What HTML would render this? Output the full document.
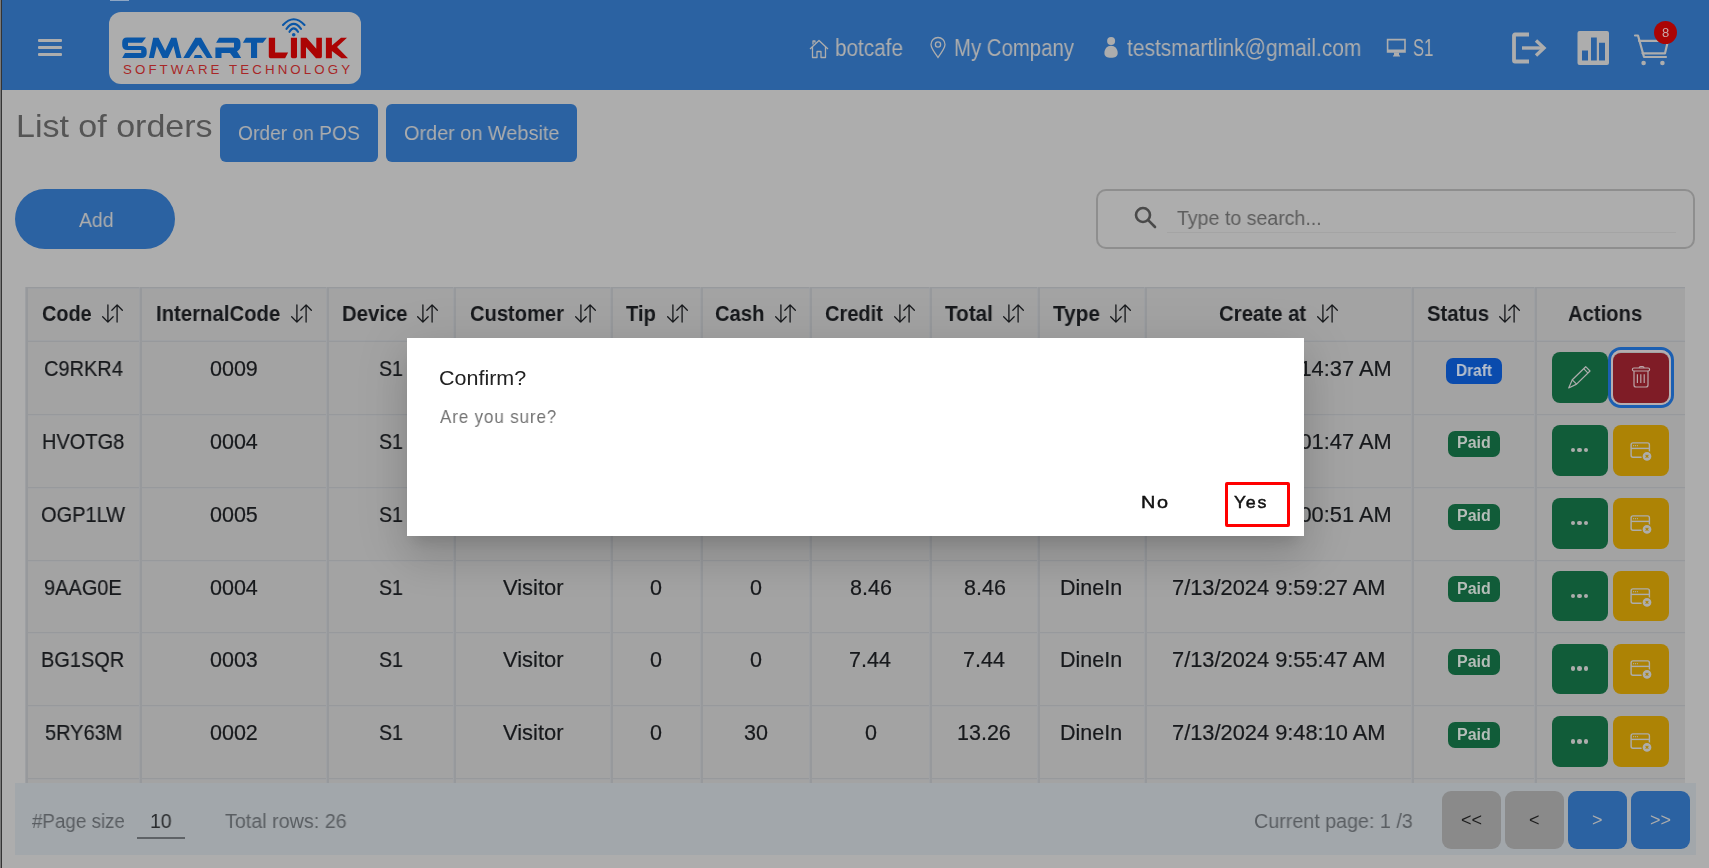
<!DOCTYPE html>
<html><head><meta charset="utf-8"><style>
html,body{margin:0;padding:0;}
body{-webkit-font-smoothing:antialiased;width:1709px;height:868px;overflow:hidden;position:relative;font-family:"Liberation Sans", sans-serif;background:#adadad;}
</style></head><body>
<div style="position:absolute;left:0px;top:0px;width:1709px;height:90px;background:#2b62a2"></div>
<div style="position:absolute;left:110px;top:0px;width:19px;height:1px;background:#8ea6c4"></div>
<div style="position:absolute;left:38px;top:39px;width:24px;height:2.8px;background:#adadad;border-radius:1px"></div>
<div style="position:absolute;left:38px;top:46px;width:24px;height:2.8px;background:#adadad;border-radius:1px"></div>
<div style="position:absolute;left:38px;top:53px;width:24px;height:2.8px;background:#adadad;border-radius:1px"></div>
<div style="position:absolute;left:109px;top:12px;width:252px;height:72px;background:#adadad;border-radius:12px"></div>
<svg style="position:absolute;left:0;top:0" width="400" height="90" viewBox="0 0 400 90">
<g fill="#0a56a6">
<path d="M127 37.6 H146 L142 42.7 H128 V45.9 H141 Q146.7 45.9 146.7 51 V53 Q146.7 58.1 141.5 58.1 H122.2 L125 53 H141.2 V50.1 H127.5 Q122.2 50.1 122.2 45 V42.5 Q122.2 37.6 127 37.6 Z"/>
<path d="M148.9 58.1 L153.2 37.8 H158.5 L165.2 50.8 L171.2 37.8 H176.5 L181.5 58.1 H176.5 L173.5 46 L167.9 58.1 H162.6 L156.8 46 L153.9 58.1 Z"/>
<path d="M183.3 58.1 L195.4 37.8 H201.1 L212.6 58.1 H206.9 L198.3 45.1 L189.2 58.1 Z M193.7 58.1 L194.8 55.1 H200.9 L202.8 58.1 Z"/>
<path d="M219.1 37.7 H235 Q240.5 37.7 240.5 43 V45.5 Q240.5 49.8 237 51.2 L241.2 58.1 H233.7 L230 53 H221.5 V58.1 H215.4 V47.6 H234 V42.8 H216.1 Z"/>
<path d="M245.9 37.7 H266.8 L262.9 42.8 H257.1 V58.1 H251 V42.8 H242.9 Z"/>
</g>
<g fill="#ab0404">
<path d="M268.8 37.8 H275.1 V52.6 H288.1 L285.1 58.2 H270.5 Q268.8 58.2 268.8 56.5 Z"/>
<path d="M290.9 37.8 H297 V56.6 Q297 58.2 295.4 58.2 H292.5 Q290.9 58.2 290.9 56.6 Z"/>
<path d="M300.7 58.2 V37.8 H306.5 L316.3 48.8 V37.8 H321.9 V56.6 Q321.9 58.2 320.3 58.2 H316 L306 47 V58.2 Z"/>
<path d="M325.9 37.8 H331.9 V45.6 L341 37.8 H347 L337 47.1 L348 58.2 H341.5 L331.9 51 V58.2 H325.9 Z"/>
</g>
<g fill="none" stroke="#0a56a6" stroke-width="2.1" stroke-linecap="round">
<path d="M283 25 Q293.7 13.5 304.5 25"/>
<path d="M286.5 28.8 Q293.7 19 301 28.8"/>
<path d="M289.5 31.8 Q293.7 25 298 31.8"/>
</g>
<circle cx="293.7" cy="34.7" r="1.8" fill="#0a56a6"/>
<text x="123" y="74" font-family="Liberation Sans" font-weight="400" font-size="13.3" fill="#a82626" textLength="227" lengthAdjust="spacing">SOFTWARE TECHNOLOGY</text>
</svg>
<svg style="position:absolute;left:809px;top:39px;overflow:visible;" width="20" height="20" viewBox="0 0 20 20"><g fill="none" stroke="#adadad" stroke-width="1.3" stroke-linejoin="round"><path d="M1 10 L10 1.5 L19 10"/><path d="M3.5 8 V18.5 H8 V12.5 H12 V18.5 H16.5 V8"/><path d="M4 5.5 V2 H6 V3.8"/></g></svg>
<div style="position:absolute;left:834.65px;top:35px;line-height:26px;height:26px;font-size:23px;font-weight:400;color:#adadad;white-space:nowrap;letter-spacing:0px;transform-origin:0 0;transform:scaleX(0.9002);will-change:transform;">botcafe</div>
<svg style="position:absolute;left:930px;top:37px;overflow:visible;" width="16" height="22" viewBox="0 0 16 22"><g fill="none" stroke="#adadad" stroke-width="1.3"><path d="M8 20.5 C4 15 1 11 1 7.5 A7 7 0 0 1 15 7.5 C15 11 12 15 8 20.5 Z"/><circle cx="8" cy="7.5" r="2.6"/></g></svg>
<div style="position:absolute;left:954.04px;top:35px;line-height:26px;height:26px;font-size:23px;font-weight:400;color:#adadad;white-space:nowrap;letter-spacing:0px;transform-origin:0 0;transform:scaleX(0.8853);will-change:transform;">My Company</div>
<svg style="position:absolute;left:1104px;top:37px;overflow:visible;" width="14" height="21" viewBox="0 0 14 21"><g fill="#adadad"><circle cx="7.1" cy="4" r="4"/><path d="M7 8.8 C11 8.8 13.7 12 13.7 16 C13.7 19.5 11 20.8 7 20.8 C3 20.8 0.4 19.5 0.4 16 C0.4 12 3 8.8 7 8.8 Z"/></g></svg>
<div style="position:absolute;left:1126.56px;top:35px;line-height:26px;height:26px;font-size:23px;font-weight:400;color:#adadad;white-space:nowrap;letter-spacing:0px;transform-origin:0 0;transform:scaleX(0.9112);will-change:transform;">testsmartlink@gmail.com</div>
<svg style="position:absolute;left:1386px;top:38px;overflow:visible;" width="20" height="19" viewBox="0 0 20 19"><g fill="#adadad"><path fill-rule="evenodd" d="M0.8 0.8 H19.8 V14.7 H0.8 Z M2.4 2.5 V11.5 H18.2 V2.5 Z"/><rect x="8" y="14.5" width="5" height="2.7"/><path d="M6.8 18.6 L7.6 17 H13.4 L14.2 18.6 Z"/></g></svg>
<div style="position:absolute;left:1412.67px;top:35px;line-height:26px;height:26px;font-size:23px;font-weight:400;color:#adadad;white-space:nowrap;letter-spacing:0px;transform-origin:0 0;transform:scaleX(0.7269);will-change:transform;">S1</div>
<svg style="position:absolute;left:1510px;top:30px;overflow:visible;" width="40" height="36" viewBox="0 0 40 36"><g fill="none" stroke="#adadad" stroke-width="3.8" stroke-linejoin="round"><path d="M19 4.5 H5 Q4 4.5 4 5.5 V30.5 Q4 31.5 5 31.5 H19"/></g><g fill="none" stroke="#adadad" stroke-width="3.4"><path d="M12 18 H34"/><path d="M26 10.5 L34 18 L26 25.5"/></g></svg>
<svg style="position:absolute;left:1577px;top:30px;overflow:visible;" width="33" height="36" viewBox="0 0 33 36"><path fill="#adadad" fill-rule="evenodd" d="M2.5 1 H30 Q32 1 32 3 V33 Q32 35 30 35 H2.5 Q0.5 35 0.5 33 V3 Q0.5 1 2.5 1 Z M5 20.5 V30.5 H11 V20.5 Z M14 7.5 V30.5 H19.8 V7.5 Z M22 12.8 V30.5 H28 V12.8 Z"/></svg>
<svg style="position:absolute;left:1633px;top:33px;overflow:visible;" width="38" height="34" viewBox="0 0 38 34"><g fill="none" stroke="#adadad" stroke-width="2.2" stroke-linejoin="round" stroke-linecap="round"><path d="M2 2.5 H5 L11 24 H33"/><path d="M6 7.8 H35 L32 20.3 H9.5"/></g><circle cx="10.6" cy="30" r="2.3" fill="#adadad"/><circle cx="29.4" cy="30" r="2.3" fill="#adadad"/></svg>
<div style="position:absolute;left:1653.8px;top:20.9px;width:23px;height:23px;border-radius:50%;background:#ab0404;"></div>
<div style="position:absolute;left:1661.94px;top:25px;line-height:15px;height:15px;font-size:13px;font-weight:400;color:#c9a9a9;white-space:nowrap;letter-spacing:0px;transform-origin:0 0;transform:scaleX(1.0000);will-change:transform;">8</div>
<div style="position:absolute;left:0px;top:0px;width:1px;height:868px;background:#7a7a7a"></div>
<div style="position:absolute;left:1px;top:0px;width:1px;height:868px;background:#343434"></div>
<div style="position:absolute;left:15.91px;top:108px;line-height:36px;height:36px;font-size:32px;font-weight:400;color:#555555;white-space:nowrap;letter-spacing:0px;transform-origin:0 0;transform:scaleX(1.0626);will-change:transform;">List of orders</div>
<div style="position:absolute;left:220px;top:104px;width:158px;height:58px;background:#2b62a2;border-radius:6px"></div>
<div style="position:absolute;left:237.86px;top:121px;line-height:23px;height:23px;font-size:20.5px;font-weight:400;color:#adadad;white-space:nowrap;letter-spacing:0px;transform-origin:0 0;transform:scaleX(0.9383);will-change:transform;">Order on POS</div>
<div style="position:absolute;left:386px;top:104px;width:191px;height:58px;background:#2b62a2;border-radius:6px"></div>
<div style="position:absolute;left:403.83px;top:121px;line-height:23px;height:23px;font-size:20.5px;font-weight:400;color:#adadad;white-space:nowrap;letter-spacing:0px;transform-origin:0 0;transform:scaleX(0.9692);will-change:transform;">Order on Website</div>
<div style="position:absolute;left:15px;top:189px;width:160px;height:60px;background:#2b62a2;border-radius:30px"></div>
<div style="position:absolute;left:79.00px;top:209px;line-height:22px;height:22px;font-size:20px;font-weight:400;color:#adadad;white-space:nowrap;letter-spacing:0px;transform-origin:0 0;transform:scaleX(0.9716);will-change:transform;">Add</div>
<div style="position:absolute;left:1096px;top:189px;width:599px;height:60px;border:2px solid #8e8e8e;border-radius:10px;box-sizing:border-box"></div>
<svg style="position:absolute;left:1133px;top:205px;overflow:visible;" width="25" height="25" viewBox="0 0 25 25"><g fill="none" stroke="#4a4a4a" stroke-width="2.6" stroke-linecap="round"><circle cx="10" cy="10" r="7"/><path d="M15.2 15.2 L22 22"/></g></svg>
<div style="position:absolute;left:1177.13px;top:207px;line-height:22px;height:22px;font-size:20px;font-weight:400;color:#5d5d5d;white-space:nowrap;letter-spacing:0px;transform-origin:0 0;transform:scaleX(0.9785);will-change:transform;">Type to search...</div>
<div style="position:absolute;left:1167px;top:231.5px;width:509px;height:1px;background:#a4a4a4"></div>
<div style="position:absolute;left:26px;top:287px;width:1659px;height:496.4px;background:#a3a3a3"></div>
<div style="position:absolute;left:26px;top:287px;width:1659px;height:1px;background:#97999c"></div>
<div style="position:absolute;left:26px;top:288px;width:1659px;height:1px;background:#9ea0a3"></div>
<div style="position:absolute;left:26px;top:340px;width:1659px;height:1px;background:#9ea0a3"></div>
<div style="position:absolute;left:26px;top:341px;width:1659px;height:1px;background:#97999c"></div>
<div style="position:absolute;left:26px;top:414px;width:1659px;height:1px;background:#97999c"></div>
<div style="position:absolute;left:26px;top:415px;width:1659px;height:1px;background:#a0a1a3"></div>
<div style="position:absolute;left:26px;top:487px;width:1659px;height:1px;background:#97999c"></div>
<div style="position:absolute;left:26px;top:488px;width:1659px;height:1px;background:#a0a1a3"></div>
<div style="position:absolute;left:26px;top:560px;width:1659px;height:1px;background:#97999c"></div>
<div style="position:absolute;left:26px;top:561px;width:1659px;height:1px;background:#a0a1a3"></div>
<div style="position:absolute;left:26px;top:632px;width:1659px;height:1px;background:#97999c"></div>
<div style="position:absolute;left:26px;top:633px;width:1659px;height:1px;background:#a0a1a3"></div>
<div style="position:absolute;left:26px;top:705px;width:1659px;height:1px;background:#97999c"></div>
<div style="position:absolute;left:26px;top:706px;width:1659px;height:1px;background:#a0a1a3"></div>
<div style="position:absolute;left:26px;top:778px;width:1659px;height:1px;background:#97999c"></div>
<div style="position:absolute;left:26px;top:779px;width:1659px;height:1px;background:#a0a1a3"></div>
<div style="position:absolute;left:25px;top:287px;width:1px;height:496.4px;background:#9ea0a3"></div>
<div style="position:absolute;left:26px;top:287px;width:2px;height:496.4px;background:#97999c"></div>
<div style="position:absolute;left:139px;top:287px;width:1px;height:496.4px;background:#9ea0a3"></div>
<div style="position:absolute;left:140px;top:287px;width:2px;height:496.4px;background:#97999c"></div>
<div style="position:absolute;left:326px;top:287px;width:1px;height:496.4px;background:#9ea0a3"></div>
<div style="position:absolute;left:327px;top:287px;width:2px;height:496.4px;background:#97999c"></div>
<div style="position:absolute;left:453px;top:287px;width:1px;height:496.4px;background:#9ea0a3"></div>
<div style="position:absolute;left:454px;top:287px;width:2px;height:496.4px;background:#97999c"></div>
<div style="position:absolute;left:610px;top:287px;width:1px;height:496.4px;background:#9ea0a3"></div>
<div style="position:absolute;left:611px;top:287px;width:2px;height:496.4px;background:#97999c"></div>
<div style="position:absolute;left:700px;top:287px;width:1px;height:496.4px;background:#9ea0a3"></div>
<div style="position:absolute;left:701px;top:287px;width:2px;height:496.4px;background:#97999c"></div>
<div style="position:absolute;left:809px;top:287px;width:1px;height:496.4px;background:#9ea0a3"></div>
<div style="position:absolute;left:810px;top:287px;width:2px;height:496.4px;background:#97999c"></div>
<div style="position:absolute;left:929px;top:287px;width:1px;height:496.4px;background:#9ea0a3"></div>
<div style="position:absolute;left:930px;top:287px;width:2px;height:496.4px;background:#97999c"></div>
<div style="position:absolute;left:1037px;top:287px;width:1px;height:496.4px;background:#9ea0a3"></div>
<div style="position:absolute;left:1038px;top:287px;width:2px;height:496.4px;background:#97999c"></div>
<div style="position:absolute;left:1144px;top:287px;width:1px;height:496.4px;background:#9ea0a3"></div>
<div style="position:absolute;left:1145px;top:287px;width:2px;height:496.4px;background:#97999c"></div>
<div style="position:absolute;left:1411px;top:287px;width:1px;height:496.4px;background:#9ea0a3"></div>
<div style="position:absolute;left:1412px;top:287px;width:2px;height:496.4px;background:#97999c"></div>
<div style="position:absolute;left:1534px;top:287px;width:1px;height:496.4px;background:#9ea0a3"></div>
<div style="position:absolute;left:1535px;top:287px;width:2px;height:496.4px;background:#97999c"></div>
<div style="position:absolute;left:41.99px;top:302px;line-height:24px;height:24px;font-size:21.5px;font-weight:700;color:#17191c;white-space:nowrap;letter-spacing:0px;transform-origin:0 0;transform:scaleX(0.9228);will-change:transform;">Code</div>
<svg style="position:absolute;left:102px;top:302.5px;overflow:visible;" width="21" height="21" viewBox="0 0 16 16"><g fill="#17191c"><path fill-rule="evenodd" d="M11.5 15a.5.5 0 0 0 .5-.5V2.707l3.146 3.147a.5.5 0 0 0 .708-.708l-4-4a.5.5 0 0 0-.708 0l-4 4a.5.5 0 1 0 .708.708L11 2.707V14.5a.5.5 0 0 0 .5.5m-7-14a.5.5 0 0 1 .5.5v11.793l3.146-3.147a.5.5 0 0 1 .708.708l-4 4a.5.5 0 0 1-.708 0l-4-4a.5.5 0 0 1 .708-.708L4 13.293V1.5a.5.5 0 0 1 .5-.5"/></g></svg>
<div style="position:absolute;left:155.70px;top:302px;line-height:24px;height:24px;font-size:21.5px;font-weight:700;color:#17191c;white-space:nowrap;letter-spacing:0px;transform-origin:0 0;transform:scaleX(0.9453);will-change:transform;">InternalCode</div>
<svg style="position:absolute;left:290.6px;top:302.5px;overflow:visible;" width="21" height="21" viewBox="0 0 16 16"><g fill="#17191c"><path fill-rule="evenodd" d="M11.5 15a.5.5 0 0 0 .5-.5V2.707l3.146 3.147a.5.5 0 0 0 .708-.708l-4-4a.5.5 0 0 0-.708 0l-4 4a.5.5 0 1 0 .708.708L11 2.707V14.5a.5.5 0 0 0 .5.5m-7-14a.5.5 0 0 1 .5.5v11.793l3.146-3.147a.5.5 0 0 1 .708.708l-4 4a.5.5 0 0 1-.708 0l-4-4a.5.5 0 0 1 .708-.708L4 13.293V1.5a.5.5 0 0 1 .5-.5"/></g></svg>
<div style="position:absolute;left:342.10px;top:302px;line-height:24px;height:24px;font-size:21.5px;font-weight:700;color:#17191c;white-space:nowrap;letter-spacing:0px;transform-origin:0 0;transform:scaleX(0.9457);will-change:transform;">Device</div>
<svg style="position:absolute;left:417px;top:302.5px;overflow:visible;" width="21" height="21" viewBox="0 0 16 16"><g fill="#17191c"><path fill-rule="evenodd" d="M11.5 15a.5.5 0 0 0 .5-.5V2.707l3.146 3.147a.5.5 0 0 0 .708-.708l-4-4a.5.5 0 0 0-.708 0l-4 4a.5.5 0 1 0 .708.708L11 2.707V14.5a.5.5 0 0 0 .5.5m-7-14a.5.5 0 0 1 .5.5v11.793l3.146-3.147a.5.5 0 0 1 .708.708l-4 4a.5.5 0 0 1-.708 0l-4-4a.5.5 0 0 1 .708-.708L4 13.293V1.5a.5.5 0 0 1 .5-.5"/></g></svg>
<div style="position:absolute;left:469.58px;top:302px;line-height:24px;height:24px;font-size:21.5px;font-weight:700;color:#17191c;white-space:nowrap;letter-spacing:0px;transform-origin:0 0;transform:scaleX(0.9362);will-change:transform;">Customer</div>
<svg style="position:absolute;left:574.8px;top:302.5px;overflow:visible;" width="21" height="21" viewBox="0 0 16 16"><g fill="#17191c"><path fill-rule="evenodd" d="M11.5 15a.5.5 0 0 0 .5-.5V2.707l3.146 3.147a.5.5 0 0 0 .708-.708l-4-4a.5.5 0 0 0-.708 0l-4 4a.5.5 0 1 0 .708.708L11 2.707V14.5a.5.5 0 0 0 .5.5m-7-14a.5.5 0 0 1 .5.5v11.793l3.146-3.147a.5.5 0 0 1 .708.708l-4 4a.5.5 0 0 1-.708 0l-4-4a.5.5 0 0 1 .708-.708L4 13.293V1.5a.5.5 0 0 1 .5-.5"/></g></svg>
<div style="position:absolute;left:625.97px;top:302px;line-height:24px;height:24px;font-size:21.5px;font-weight:700;color:#17191c;white-space:nowrap;letter-spacing:0px;transform-origin:0 0;transform:scaleX(0.9366);will-change:transform;">Tip</div>
<svg style="position:absolute;left:666.6px;top:302.5px;overflow:visible;" width="21" height="21" viewBox="0 0 16 16"><g fill="#17191c"><path fill-rule="evenodd" d="M11.5 15a.5.5 0 0 0 .5-.5V2.707l3.146 3.147a.5.5 0 0 0 .708-.708l-4-4a.5.5 0 0 0-.708 0l-4 4a.5.5 0 1 0 .708.708L11 2.707V14.5a.5.5 0 0 0 .5.5m-7-14a.5.5 0 0 1 .5.5v11.793l3.146-3.147a.5.5 0 0 1 .708.708l-4 4a.5.5 0 0 1-.708 0l-4-4a.5.5 0 0 1 .708-.708L4 13.293V1.5a.5.5 0 0 1 .5-.5"/></g></svg>
<div style="position:absolute;left:715.18px;top:302px;line-height:24px;height:24px;font-size:21.5px;font-weight:700;color:#17191c;white-space:nowrap;letter-spacing:0px;transform-origin:0 0;transform:scaleX(0.9386);will-change:transform;">Cash</div>
<svg style="position:absolute;left:774.6px;top:302.5px;overflow:visible;" width="21" height="21" viewBox="0 0 16 16"><g fill="#17191c"><path fill-rule="evenodd" d="M11.5 15a.5.5 0 0 0 .5-.5V2.707l3.146 3.147a.5.5 0 0 0 .708-.708l-4-4a.5.5 0 0 0-.708 0l-4 4a.5.5 0 1 0 .708.708L11 2.707V14.5a.5.5 0 0 0 .5.5m-7-14a.5.5 0 0 1 .5.5v11.793l3.146-3.147a.5.5 0 0 1 .708.708l-4 4a.5.5 0 0 1-.708 0l-4-4a.5.5 0 0 1 .708-.708L4 13.293V1.5a.5.5 0 0 1 .5-.5"/></g></svg>
<div style="position:absolute;left:824.99px;top:302px;line-height:24px;height:24px;font-size:21.5px;font-weight:700;color:#17191c;white-space:nowrap;letter-spacing:0px;transform-origin:0 0;transform:scaleX(0.9311);will-change:transform;">Credit</div>
<svg style="position:absolute;left:894px;top:302.5px;overflow:visible;" width="21" height="21" viewBox="0 0 16 16"><g fill="#17191c"><path fill-rule="evenodd" d="M11.5 15a.5.5 0 0 0 .5-.5V2.707l3.146 3.147a.5.5 0 0 0 .708-.708l-4-4a.5.5 0 0 0-.708 0l-4 4a.5.5 0 1 0 .708.708L11 2.707V14.5a.5.5 0 0 0 .5.5m-7-14a.5.5 0 0 1 .5.5v11.793l3.146-3.147a.5.5 0 0 1 .708.708l-4 4a.5.5 0 0 1-.708 0l-4-4a.5.5 0 0 1 .708-.708L4 13.293V1.5a.5.5 0 0 1 .5-.5"/></g></svg>
<div style="position:absolute;left:945.06px;top:302px;line-height:24px;height:24px;font-size:21.5px;font-weight:700;color:#17191c;white-space:nowrap;letter-spacing:0px;transform-origin:0 0;transform:scaleX(0.9625);will-change:transform;">Total</div>
<svg style="position:absolute;left:1002.7px;top:302.5px;overflow:visible;" width="21" height="21" viewBox="0 0 16 16"><g fill="#17191c"><path fill-rule="evenodd" d="M11.5 15a.5.5 0 0 0 .5-.5V2.707l3.146 3.147a.5.5 0 0 0 .708-.708l-4-4a.5.5 0 0 0-.708 0l-4 4a.5.5 0 1 0 .708.708L11 2.707V14.5a.5.5 0 0 0 .5.5m-7-14a.5.5 0 0 1 .5.5v11.793l3.146-3.147a.5.5 0 0 1 .708.708l-4 4a.5.5 0 0 1-.708 0l-4-4a.5.5 0 0 1 .708-.708L4 13.293V1.5a.5.5 0 0 1 .5-.5"/></g></svg>
<div style="position:absolute;left:1052.76px;top:302px;line-height:24px;height:24px;font-size:21.5px;font-weight:700;color:#17191c;white-space:nowrap;letter-spacing:0px;transform-origin:0 0;transform:scaleX(0.9638);will-change:transform;">Type</div>
<svg style="position:absolute;left:1110px;top:302.5px;overflow:visible;" width="21" height="21" viewBox="0 0 16 16"><g fill="#17191c"><path fill-rule="evenodd" d="M11.5 15a.5.5 0 0 0 .5-.5V2.707l3.146 3.147a.5.5 0 0 0 .708-.708l-4-4a.5.5 0 0 0-.708 0l-4 4a.5.5 0 1 0 .708.708L11 2.707V14.5a.5.5 0 0 0 .5.5m-7-14a.5.5 0 0 1 .5.5v11.793l3.146-3.147a.5.5 0 0 1 .708.708l-4 4a.5.5 0 0 1-.708 0l-4-4a.5.5 0 0 1 .708-.708L4 13.293V1.5a.5.5 0 0 1 .5-.5"/></g></svg>
<div style="position:absolute;left:1218.87px;top:302px;line-height:24px;height:24px;font-size:21.5px;font-weight:700;color:#17191c;white-space:nowrap;letter-spacing:0px;transform-origin:0 0;transform:scaleX(0.9475);will-change:transform;">Create at</div>
<svg style="position:absolute;left:1317px;top:302.5px;overflow:visible;" width="21" height="21" viewBox="0 0 16 16"><g fill="#17191c"><path fill-rule="evenodd" d="M11.5 15a.5.5 0 0 0 .5-.5V2.707l3.146 3.147a.5.5 0 0 0 .708-.708l-4-4a.5.5 0 0 0-.708 0l-4 4a.5.5 0 1 0 .708.708L11 2.707V14.5a.5.5 0 0 0 .5.5m-7-14a.5.5 0 0 1 .5.5v11.793l3.146-3.147a.5.5 0 0 1 .708.708l-4 4a.5.5 0 0 1-.708 0l-4-4a.5.5 0 0 1 .708-.708L4 13.293V1.5a.5.5 0 0 1 .5-.5"/></g></svg>
<div style="position:absolute;left:1426.91px;top:302px;line-height:24px;height:24px;font-size:21.5px;font-weight:700;color:#17191c;white-space:nowrap;letter-spacing:0px;transform-origin:0 0;transform:scaleX(0.9447);will-change:transform;">Status</div>
<svg style="position:absolute;left:1499.4px;top:302.5px;overflow:visible;" width="21" height="21" viewBox="0 0 16 16"><g fill="#17191c"><path fill-rule="evenodd" d="M11.5 15a.5.5 0 0 0 .5-.5V2.707l3.146 3.147a.5.5 0 0 0 .708-.708l-4-4a.5.5 0 0 0-.708 0l-4 4a.5.5 0 1 0 .708.708L11 2.707V14.5a.5.5 0 0 0 .5.5m-7-14a.5.5 0 0 1 .5.5v11.793l3.146-3.147a.5.5 0 0 1 .708.708l-4 4a.5.5 0 0 1-.708 0l-4-4a.5.5 0 0 1 .708-.708L4 13.293V1.5a.5.5 0 0 1 .5-.5"/></g></svg>
<div style="position:absolute;left:1568.03px;top:302px;line-height:24px;height:24px;font-size:21.5px;font-weight:700;color:#17191c;white-space:nowrap;letter-spacing:0px;transform-origin:0 0;transform:scaleX(0.9406);will-change:transform;">Actions</div>
<div style="position:absolute;left:43.70px;top:357px;line-height:24px;height:24px;font-size:21.5px;font-weight:400;color:#17191c;white-space:nowrap;letter-spacing:0px;transform-origin:0 0;transform:scaleX(0.9300);will-change:transform;-webkit-text-stroke:0.2px #17191c;">C9RKR4</div>
<div style="position:absolute;left:210.23px;top:357px;line-height:24px;height:24px;font-size:21.5px;font-weight:400;color:#17191c;white-space:nowrap;letter-spacing:0px;transform-origin:0 0;transform:scaleX(1.0000);will-change:transform;-webkit-text-stroke:0.2px #17191c;">0009</div>
<div style="position:absolute;left:379.26px;top:357px;line-height:24px;height:24px;font-size:21.5px;font-weight:400;color:#17191c;white-space:nowrap;letter-spacing:0px;transform-origin:0 0;transform:scaleX(0.9100);will-change:transform;-webkit-text-stroke:0.2px #17191c;">S1</div>
<div style="position:absolute;left:502.80px;top:357px;line-height:24px;height:24px;font-size:21.5px;font-weight:400;color:#17191c;white-space:nowrap;letter-spacing:0px;transform-origin:0 0;transform:scaleX(1.0200);will-change:transform;-webkit-text-stroke:0.2px #17191c;">Visitor</div>
<div style="position:absolute;left:650.45px;top:357px;line-height:24px;height:24px;font-size:21.5px;font-weight:400;color:#17191c;white-space:nowrap;letter-spacing:0px;transform-origin:0 0;transform:scaleX(1.0000);will-change:transform;-webkit-text-stroke:0.2px #17191c;">0</div>
<div style="position:absolute;left:750.05px;top:357px;line-height:24px;height:24px;font-size:21.5px;font-weight:400;color:#17191c;white-space:nowrap;letter-spacing:0px;transform-origin:0 0;transform:scaleX(1.0000);will-change:transform;-webkit-text-stroke:0.2px #17191c;">0</div>
<div style="position:absolute;left:864.50px;top:357px;line-height:24px;height:24px;font-size:21.5px;font-weight:400;color:#17191c;white-space:nowrap;letter-spacing:0px;transform-origin:0 0;transform:scaleX(1.0000);will-change:transform;-webkit-text-stroke:0.2px #17191c;">0</div>
<div style="position:absolute;left:963.67px;top:357px;line-height:24px;height:24px;font-size:21.5px;font-weight:400;color:#17191c;white-space:nowrap;letter-spacing:0px;transform-origin:0 0;transform:scaleX(1.0000);will-change:transform;-webkit-text-stroke:0.2px #17191c;">8.46</div>
<div style="position:absolute;left:1060.49px;top:357px;line-height:24px;height:24px;font-size:21.5px;font-weight:400;color:#17191c;white-space:nowrap;letter-spacing:0px;transform-origin:0 0;transform:scaleX(1.0000);will-change:transform;-webkit-text-stroke:0.2px #17191c;">DineIn</div>
<div style="position:absolute;left:1166.28px;top:357px;line-height:24px;height:24px;font-size:21.5px;font-weight:400;color:#17191c;white-space:nowrap;letter-spacing:0px;transform-origin:0 0;transform:scaleX(1.0150);will-change:transform;-webkit-text-stroke:0.2px #17191c;">7/13/2024 10:14:37 AM</div>
<div style="position:absolute;left:1446px;top:357.9px;width:56px;height:26.6px;background:#0a4bad;border-radius:7px"></div>
<div style="position:absolute;left:1455.64px;top:362px;line-height:17px;height:17px;font-size:16px;font-weight:700;color:#b8c0cc;white-space:nowrap;letter-spacing:0px;transform-origin:0 0;transform:scaleX(0.9633);will-change:transform;">Draft</div>
<div style="position:absolute;left:1552px;top:352.3px;width:55.6px;height:50.7px;background:#115c39;border-radius:8px"></div>
<svg style="position:absolute;left:1560px;top:360.0px;overflow:visible;" width="40" height="40" viewBox="0 0 40 40"><g fill="none" stroke="#adadad" stroke-width="1.2" stroke-linejoin="round"><path d="M12.3 19.8 L25.7 6.7 L30 11 L16.6 24.1 Z"/><path d="M12.3 19.8 L8.7 28 L16.6 24.1"/><path d="M23.7 8.7 L28 13.2"/></g></svg>
<div style="position:absolute;left:1608.2px;top:347.0px;width:66px;height:61.2px;border:3px solid #1b5fb2;border-radius:13px;box-sizing:border-box"></div>
<div style="position:absolute;left:1611.2px;top:350.0px;width:60px;height:55.2px;border:2px solid #b5aeb0;border-radius:10px;box-sizing:border-box"></div>
<div style="position:absolute;left:1612.9px;top:352.5px;width:56.1px;height:50.5px;background:#7f1c26;border-radius:8px"></div>
<svg style="position:absolute;left:1620px;top:355.0px;overflow:visible;" width="40" height="40" viewBox="0 0 40 40"><g fill="none" stroke="#bba5a8" stroke-width="1.2" stroke-linejoin="round"><path d="M19.2 13 Q19.2 11.6 20.6 11.6 H22.6 Q24 11.6 24 13"/><rect x="12.4" y="13" width="17.2" height="3" rx="1.5"/><path d="M14 16 V30 Q14 32 16 32 H26 Q28 32 28 30 V16"/><path d="M17.4 19.2 V27.9 M20.8 19.2 V27.9 M24.2 19.2 V27.9"/></g></svg>
<div style="position:absolute;left:41.90px;top:430px;line-height:24px;height:24px;font-size:21.5px;font-weight:400;color:#17191c;white-space:nowrap;letter-spacing:0px;transform-origin:0 0;transform:scaleX(0.9300);will-change:transform;-webkit-text-stroke:0.2px #17191c;">HVOTG8</div>
<div style="position:absolute;left:210.04px;top:430px;line-height:24px;height:24px;font-size:21.5px;font-weight:400;color:#17191c;white-space:nowrap;letter-spacing:0px;transform-origin:0 0;transform:scaleX(1.0000);will-change:transform;-webkit-text-stroke:0.2px #17191c;">0004</div>
<div style="position:absolute;left:379.26px;top:430px;line-height:24px;height:24px;font-size:21.5px;font-weight:400;color:#17191c;white-space:nowrap;letter-spacing:0px;transform-origin:0 0;transform:scaleX(0.9100);will-change:transform;-webkit-text-stroke:0.2px #17191c;">S1</div>
<div style="position:absolute;left:502.80px;top:430px;line-height:24px;height:24px;font-size:21.5px;font-weight:400;color:#17191c;white-space:nowrap;letter-spacing:0px;transform-origin:0 0;transform:scaleX(1.0200);will-change:transform;-webkit-text-stroke:0.2px #17191c;">Visitor</div>
<div style="position:absolute;left:650.45px;top:430px;line-height:24px;height:24px;font-size:21.5px;font-weight:400;color:#17191c;white-space:nowrap;letter-spacing:0px;transform-origin:0 0;transform:scaleX(1.0000);will-change:transform;-webkit-text-stroke:0.2px #17191c;">0</div>
<div style="position:absolute;left:750.05px;top:430px;line-height:24px;height:24px;font-size:21.5px;font-weight:400;color:#17191c;white-space:nowrap;letter-spacing:0px;transform-origin:0 0;transform:scaleX(1.0000);will-change:transform;-webkit-text-stroke:0.2px #17191c;">0</div>
<div style="position:absolute;left:864.50px;top:430px;line-height:24px;height:24px;font-size:21.5px;font-weight:400;color:#17191c;white-space:nowrap;letter-spacing:0px;transform-origin:0 0;transform:scaleX(1.0000);will-change:transform;-webkit-text-stroke:0.2px #17191c;">0</div>
<div style="position:absolute;left:963.67px;top:430px;line-height:24px;height:24px;font-size:21.5px;font-weight:400;color:#17191c;white-space:nowrap;letter-spacing:0px;transform-origin:0 0;transform:scaleX(1.0000);will-change:transform;-webkit-text-stroke:0.2px #17191c;">8.46</div>
<div style="position:absolute;left:1060.49px;top:430px;line-height:24px;height:24px;font-size:21.5px;font-weight:400;color:#17191c;white-space:nowrap;letter-spacing:0px;transform-origin:0 0;transform:scaleX(1.0000);will-change:transform;-webkit-text-stroke:0.2px #17191c;">DineIn</div>
<div style="position:absolute;left:1166.28px;top:430px;line-height:24px;height:24px;font-size:21.5px;font-weight:400;color:#17191c;white-space:nowrap;letter-spacing:0px;transform-origin:0 0;transform:scaleX(1.0150);will-change:transform;-webkit-text-stroke:0.2px #17191c;">7/13/2024 10:01:47 AM</div>
<div style="position:absolute;left:1447.7px;top:430.7px;width:52.2px;height:26.2px;background:#115c39;border-radius:7px"></div>
<div style="position:absolute;left:1457.21px;top:434px;line-height:17px;height:17px;font-size:16px;font-weight:700;color:#b5bdb8;white-space:nowrap;letter-spacing:0px;transform-origin:0 0;transform:scaleX(0.9858);will-change:transform;">Paid</div>
<div style="position:absolute;left:1552px;top:425.1px;width:55.6px;height:50.7px;background:#115c39;border-radius:8px"></div>
<div style="position:absolute;left:1570.5px;top:447.9px;width:4.6px;height:4.6px;border-radius:50%;background:#adadad"></div>
<div style="position:absolute;left:1577.3px;top:447.9px;width:4.6px;height:4.6px;border-radius:50%;background:#adadad"></div>
<div style="position:absolute;left:1583.9px;top:447.9px;width:4.6px;height:4.6px;border-radius:50%;background:#adadad"></div>
<div style="position:absolute;left:1613px;top:425.1px;width:55.8px;height:50.7px;background:#ad8305;border-radius:8px"></div>
<svg style="position:absolute;left:1620px;top:432.0px;overflow:visible;" width="40" height="40" viewBox="0 0 40 40"><g fill="none" stroke="#adadad" stroke-width="1.4"><path d="M22 25.2 H13 Q11.1 25.2 11.1 23.3 V12.8 Q11.1 10.9 13 10.9 H27.5 Q29.4 10.9 29.4 12.8 V20"/><path d="M11.1 16.4 H29.4"/></g><g fill="#adadad"><circle cx="13.6" cy="13.7" r=".6"/><circle cx="15.5" cy="13.7" r=".6"/><circle cx="17.4" cy="13.7" r=".6"/></g><circle cx="27" cy="24.3" r="5" fill="#adadad" stroke="#ad8305" stroke-width="1.2"/><path d="M25.6 22.9 L28.4 25.7 M28.4 22.9 L25.6 25.7" stroke="#ad8305" stroke-width="1.1"/></svg>
<div style="position:absolute;left:40.91px;top:503px;line-height:24px;height:24px;font-size:21.5px;font-weight:400;color:#17191c;white-space:nowrap;letter-spacing:0px;transform-origin:0 0;transform:scaleX(0.9300);will-change:transform;-webkit-text-stroke:0.2px #17191c;">OGP1LW</div>
<div style="position:absolute;left:210.16px;top:503px;line-height:24px;height:24px;font-size:21.5px;font-weight:400;color:#17191c;white-space:nowrap;letter-spacing:0px;transform-origin:0 0;transform:scaleX(1.0000);will-change:transform;-webkit-text-stroke:0.2px #17191c;">0005</div>
<div style="position:absolute;left:379.26px;top:503px;line-height:24px;height:24px;font-size:21.5px;font-weight:400;color:#17191c;white-space:nowrap;letter-spacing:0px;transform-origin:0 0;transform:scaleX(0.9100);will-change:transform;-webkit-text-stroke:0.2px #17191c;">S1</div>
<div style="position:absolute;left:502.80px;top:503px;line-height:24px;height:24px;font-size:21.5px;font-weight:400;color:#17191c;white-space:nowrap;letter-spacing:0px;transform-origin:0 0;transform:scaleX(1.0200);will-change:transform;-webkit-text-stroke:0.2px #17191c;">Visitor</div>
<div style="position:absolute;left:650.45px;top:503px;line-height:24px;height:24px;font-size:21.5px;font-weight:400;color:#17191c;white-space:nowrap;letter-spacing:0px;transform-origin:0 0;transform:scaleX(1.0000);will-change:transform;-webkit-text-stroke:0.2px #17191c;">0</div>
<div style="position:absolute;left:750.05px;top:503px;line-height:24px;height:24px;font-size:21.5px;font-weight:400;color:#17191c;white-space:nowrap;letter-spacing:0px;transform-origin:0 0;transform:scaleX(1.0000);will-change:transform;-webkit-text-stroke:0.2px #17191c;">0</div>
<div style="position:absolute;left:864.50px;top:503px;line-height:24px;height:24px;font-size:21.5px;font-weight:400;color:#17191c;white-space:nowrap;letter-spacing:0px;transform-origin:0 0;transform:scaleX(1.0000);will-change:transform;-webkit-text-stroke:0.2px #17191c;">0</div>
<div style="position:absolute;left:963.67px;top:503px;line-height:24px;height:24px;font-size:21.5px;font-weight:400;color:#17191c;white-space:nowrap;letter-spacing:0px;transform-origin:0 0;transform:scaleX(1.0000);will-change:transform;-webkit-text-stroke:0.2px #17191c;">8.46</div>
<div style="position:absolute;left:1060.49px;top:503px;line-height:24px;height:24px;font-size:21.5px;font-weight:400;color:#17191c;white-space:nowrap;letter-spacing:0px;transform-origin:0 0;transform:scaleX(1.0000);will-change:transform;-webkit-text-stroke:0.2px #17191c;">DineIn</div>
<div style="position:absolute;left:1166.28px;top:503px;line-height:24px;height:24px;font-size:21.5px;font-weight:400;color:#17191c;white-space:nowrap;letter-spacing:0px;transform-origin:0 0;transform:scaleX(1.0150);will-change:transform;-webkit-text-stroke:0.2px #17191c;">7/13/2024 10:00:51 AM</div>
<div style="position:absolute;left:1447.7px;top:503.5px;width:52.2px;height:26.2px;background:#115c39;border-radius:7px"></div>
<div style="position:absolute;left:1457.21px;top:507px;line-height:17px;height:17px;font-size:16px;font-weight:700;color:#b5bdb8;white-space:nowrap;letter-spacing:0px;transform-origin:0 0;transform:scaleX(0.9858);will-change:transform;">Paid</div>
<div style="position:absolute;left:1552px;top:497.9px;width:55.6px;height:50.7px;background:#115c39;border-radius:8px"></div>
<div style="position:absolute;left:1570.5px;top:520.7px;width:4.6px;height:4.6px;border-radius:50%;background:#adadad"></div>
<div style="position:absolute;left:1577.3px;top:520.7px;width:4.6px;height:4.6px;border-radius:50%;background:#adadad"></div>
<div style="position:absolute;left:1583.9px;top:520.7px;width:4.6px;height:4.6px;border-radius:50%;background:#adadad"></div>
<div style="position:absolute;left:1613px;top:497.9px;width:55.8px;height:50.7px;background:#ad8305;border-radius:8px"></div>
<svg style="position:absolute;left:1620px;top:504.79999999999995px;overflow:visible;" width="40" height="40" viewBox="0 0 40 40"><g fill="none" stroke="#adadad" stroke-width="1.4"><path d="M22 25.2 H13 Q11.1 25.2 11.1 23.3 V12.8 Q11.1 10.9 13 10.9 H27.5 Q29.4 10.9 29.4 12.8 V20"/><path d="M11.1 16.4 H29.4"/></g><g fill="#adadad"><circle cx="13.6" cy="13.7" r=".6"/><circle cx="15.5" cy="13.7" r=".6"/><circle cx="17.4" cy="13.7" r=".6"/></g><circle cx="27" cy="24.3" r="5" fill="#adadad" stroke="#ad8305" stroke-width="1.2"/><path d="M25.6 22.9 L28.4 25.7 M28.4 22.9 L25.6 25.7" stroke="#ad8305" stroke-width="1.1"/></svg>
<div style="position:absolute;left:44.46px;top:576px;line-height:24px;height:24px;font-size:21.5px;font-weight:400;color:#17191c;white-space:nowrap;letter-spacing:0px;transform-origin:0 0;transform:scaleX(0.9300);will-change:transform;-webkit-text-stroke:0.2px #17191c;">9AAG0E</div>
<div style="position:absolute;left:210.04px;top:576px;line-height:24px;height:24px;font-size:21.5px;font-weight:400;color:#17191c;white-space:nowrap;letter-spacing:0px;transform-origin:0 0;transform:scaleX(1.0000);will-change:transform;-webkit-text-stroke:0.2px #17191c;">0004</div>
<div style="position:absolute;left:379.26px;top:576px;line-height:24px;height:24px;font-size:21.5px;font-weight:400;color:#17191c;white-space:nowrap;letter-spacing:0px;transform-origin:0 0;transform:scaleX(0.9100);will-change:transform;-webkit-text-stroke:0.2px #17191c;">S1</div>
<div style="position:absolute;left:502.80px;top:576px;line-height:24px;height:24px;font-size:21.5px;font-weight:400;color:#17191c;white-space:nowrap;letter-spacing:0px;transform-origin:0 0;transform:scaleX(1.0200);will-change:transform;-webkit-text-stroke:0.2px #17191c;">Visitor</div>
<div style="position:absolute;left:650.45px;top:576px;line-height:24px;height:24px;font-size:21.5px;font-weight:400;color:#17191c;white-space:nowrap;letter-spacing:0px;transform-origin:0 0;transform:scaleX(1.0000);will-change:transform;-webkit-text-stroke:0.2px #17191c;">0</div>
<div style="position:absolute;left:750.05px;top:576px;line-height:24px;height:24px;font-size:21.5px;font-weight:400;color:#17191c;white-space:nowrap;letter-spacing:0px;transform-origin:0 0;transform:scaleX(1.0000);will-change:transform;-webkit-text-stroke:0.2px #17191c;">0</div>
<div style="position:absolute;left:849.62px;top:576px;line-height:24px;height:24px;font-size:21.5px;font-weight:400;color:#17191c;white-space:nowrap;letter-spacing:0px;transform-origin:0 0;transform:scaleX(1.0000);will-change:transform;-webkit-text-stroke:0.2px #17191c;">8.46</div>
<div style="position:absolute;left:963.67px;top:576px;line-height:24px;height:24px;font-size:21.5px;font-weight:400;color:#17191c;white-space:nowrap;letter-spacing:0px;transform-origin:0 0;transform:scaleX(1.0000);will-change:transform;-webkit-text-stroke:0.2px #17191c;">8.46</div>
<div style="position:absolute;left:1060.49px;top:576px;line-height:24px;height:24px;font-size:21.5px;font-weight:400;color:#17191c;white-space:nowrap;letter-spacing:0px;transform-origin:0 0;transform:scaleX(1.0000);will-change:transform;-webkit-text-stroke:0.2px #17191c;">DineIn</div>
<div style="position:absolute;left:1172.30px;top:576px;line-height:24px;height:24px;font-size:21.5px;font-weight:400;color:#17191c;white-space:nowrap;letter-spacing:0px;transform-origin:0 0;transform:scaleX(1.0150);will-change:transform;-webkit-text-stroke:0.2px #17191c;">7/13/2024 9:59:27 AM</div>
<div style="position:absolute;left:1447.7px;top:576.3px;width:52.2px;height:26.2px;background:#115c39;border-radius:7px"></div>
<div style="position:absolute;left:1457.21px;top:580px;line-height:17px;height:17px;font-size:16px;font-weight:700;color:#b5bdb8;white-space:nowrap;letter-spacing:0px;transform-origin:0 0;transform:scaleX(0.9858);will-change:transform;">Paid</div>
<div style="position:absolute;left:1552px;top:570.7px;width:55.6px;height:50.7px;background:#115c39;border-radius:8px"></div>
<div style="position:absolute;left:1570.5px;top:593.5px;width:4.6px;height:4.6px;border-radius:50%;background:#adadad"></div>
<div style="position:absolute;left:1577.3px;top:593.5px;width:4.6px;height:4.6px;border-radius:50%;background:#adadad"></div>
<div style="position:absolute;left:1583.9px;top:593.5px;width:4.6px;height:4.6px;border-radius:50%;background:#adadad"></div>
<div style="position:absolute;left:1613px;top:570.7px;width:55.8px;height:50.7px;background:#ad8305;border-radius:8px"></div>
<svg style="position:absolute;left:1620px;top:577.6px;overflow:visible;" width="40" height="40" viewBox="0 0 40 40"><g fill="none" stroke="#adadad" stroke-width="1.4"><path d="M22 25.2 H13 Q11.1 25.2 11.1 23.3 V12.8 Q11.1 10.9 13 10.9 H27.5 Q29.4 10.9 29.4 12.8 V20"/><path d="M11.1 16.4 H29.4"/></g><g fill="#adadad"><circle cx="13.6" cy="13.7" r=".6"/><circle cx="15.5" cy="13.7" r=".6"/><circle cx="17.4" cy="13.7" r=".6"/></g><circle cx="27" cy="24.3" r="5" fill="#adadad" stroke="#ad8305" stroke-width="1.2"/><path d="M25.6 22.9 L28.4 25.7 M28.4 22.9 L25.6 25.7" stroke="#ad8305" stroke-width="1.1"/></svg>
<div style="position:absolute;left:41.38px;top:648px;line-height:24px;height:24px;font-size:21.5px;font-weight:400;color:#17191c;white-space:nowrap;letter-spacing:0px;transform-origin:0 0;transform:scaleX(0.9300);will-change:transform;-webkit-text-stroke:0.2px #17191c;">BG1SQR</div>
<div style="position:absolute;left:210.23px;top:648px;line-height:24px;height:24px;font-size:21.5px;font-weight:400;color:#17191c;white-space:nowrap;letter-spacing:0px;transform-origin:0 0;transform:scaleX(1.0000);will-change:transform;-webkit-text-stroke:0.2px #17191c;">0003</div>
<div style="position:absolute;left:379.26px;top:648px;line-height:24px;height:24px;font-size:21.5px;font-weight:400;color:#17191c;white-space:nowrap;letter-spacing:0px;transform-origin:0 0;transform:scaleX(0.9100);will-change:transform;-webkit-text-stroke:0.2px #17191c;">S1</div>
<div style="position:absolute;left:502.80px;top:648px;line-height:24px;height:24px;font-size:21.5px;font-weight:400;color:#17191c;white-space:nowrap;letter-spacing:0px;transform-origin:0 0;transform:scaleX(1.0200);will-change:transform;-webkit-text-stroke:0.2px #17191c;">Visitor</div>
<div style="position:absolute;left:650.45px;top:648px;line-height:24px;height:24px;font-size:21.5px;font-weight:400;color:#17191c;white-space:nowrap;letter-spacing:0px;transform-origin:0 0;transform:scaleX(1.0000);will-change:transform;-webkit-text-stroke:0.2px #17191c;">0</div>
<div style="position:absolute;left:750.05px;top:648px;line-height:24px;height:24px;font-size:21.5px;font-weight:400;color:#17191c;white-space:nowrap;letter-spacing:0px;transform-origin:0 0;transform:scaleX(1.0000);will-change:transform;-webkit-text-stroke:0.2px #17191c;">0</div>
<div style="position:absolute;left:849.31px;top:648px;line-height:24px;height:24px;font-size:21.5px;font-weight:400;color:#17191c;white-space:nowrap;letter-spacing:0px;transform-origin:0 0;transform:scaleX(1.0000);will-change:transform;-webkit-text-stroke:0.2px #17191c;">7.44</div>
<div style="position:absolute;left:963.36px;top:648px;line-height:24px;height:24px;font-size:21.5px;font-weight:400;color:#17191c;white-space:nowrap;letter-spacing:0px;transform-origin:0 0;transform:scaleX(1.0000);will-change:transform;-webkit-text-stroke:0.2px #17191c;">7.44</div>
<div style="position:absolute;left:1060.49px;top:648px;line-height:24px;height:24px;font-size:21.5px;font-weight:400;color:#17191c;white-space:nowrap;letter-spacing:0px;transform-origin:0 0;transform:scaleX(1.0000);will-change:transform;-webkit-text-stroke:0.2px #17191c;">DineIn</div>
<div style="position:absolute;left:1172.30px;top:648px;line-height:24px;height:24px;font-size:21.5px;font-weight:400;color:#17191c;white-space:nowrap;letter-spacing:0px;transform-origin:0 0;transform:scaleX(1.0150);will-change:transform;-webkit-text-stroke:0.2px #17191c;">7/13/2024 9:55:47 AM</div>
<div style="position:absolute;left:1447.7px;top:649.0999999999999px;width:52.2px;height:26.2px;background:#115c39;border-radius:7px"></div>
<div style="position:absolute;left:1457.21px;top:653px;line-height:17px;height:17px;font-size:16px;font-weight:700;color:#b5bdb8;white-space:nowrap;letter-spacing:0px;transform-origin:0 0;transform:scaleX(0.9858);will-change:transform;">Paid</div>
<div style="position:absolute;left:1552px;top:643.5px;width:55.6px;height:50.7px;background:#115c39;border-radius:8px"></div>
<div style="position:absolute;left:1570.5px;top:666.3px;width:4.6px;height:4.6px;border-radius:50%;background:#adadad"></div>
<div style="position:absolute;left:1577.3px;top:666.3px;width:4.6px;height:4.6px;border-radius:50%;background:#adadad"></div>
<div style="position:absolute;left:1583.9px;top:666.3px;width:4.6px;height:4.6px;border-radius:50%;background:#adadad"></div>
<div style="position:absolute;left:1613px;top:643.5px;width:55.8px;height:50.7px;background:#ad8305;border-radius:8px"></div>
<svg style="position:absolute;left:1620px;top:650.4px;overflow:visible;" width="40" height="40" viewBox="0 0 40 40"><g fill="none" stroke="#adadad" stroke-width="1.4"><path d="M22 25.2 H13 Q11.1 25.2 11.1 23.3 V12.8 Q11.1 10.9 13 10.9 H27.5 Q29.4 10.9 29.4 12.8 V20"/><path d="M11.1 16.4 H29.4"/></g><g fill="#adadad"><circle cx="13.6" cy="13.7" r=".6"/><circle cx="15.5" cy="13.7" r=".6"/><circle cx="17.4" cy="13.7" r=".6"/></g><circle cx="27" cy="24.3" r="5" fill="#adadad" stroke="#ad8305" stroke-width="1.2"/><path d="M25.6 22.9 L28.4 25.7 M28.4 22.9 L25.6 25.7" stroke="#ad8305" stroke-width="1.1"/></svg>
<div style="position:absolute;left:45.10px;top:721px;line-height:24px;height:24px;font-size:21.5px;font-weight:400;color:#17191c;white-space:nowrap;letter-spacing:0px;transform-origin:0 0;transform:scaleX(0.9300);will-change:transform;-webkit-text-stroke:0.2px #17191c;">5RY63M</div>
<div style="position:absolute;left:210.29px;top:721px;line-height:24px;height:24px;font-size:21.5px;font-weight:400;color:#17191c;white-space:nowrap;letter-spacing:0px;transform-origin:0 0;transform:scaleX(1.0000);will-change:transform;-webkit-text-stroke:0.2px #17191c;">0002</div>
<div style="position:absolute;left:379.26px;top:721px;line-height:24px;height:24px;font-size:21.5px;font-weight:400;color:#17191c;white-space:nowrap;letter-spacing:0px;transform-origin:0 0;transform:scaleX(0.9100);will-change:transform;-webkit-text-stroke:0.2px #17191c;">S1</div>
<div style="position:absolute;left:502.80px;top:721px;line-height:24px;height:24px;font-size:21.5px;font-weight:400;color:#17191c;white-space:nowrap;letter-spacing:0px;transform-origin:0 0;transform:scaleX(1.0200);will-change:transform;-webkit-text-stroke:0.2px #17191c;">Visitor</div>
<div style="position:absolute;left:650.45px;top:721px;line-height:24px;height:24px;font-size:21.5px;font-weight:400;color:#17191c;white-space:nowrap;letter-spacing:0px;transform-origin:0 0;transform:scaleX(1.0000);will-change:transform;-webkit-text-stroke:0.2px #17191c;">0</div>
<div style="position:absolute;left:744.05px;top:721px;line-height:24px;height:24px;font-size:21.5px;font-weight:400;color:#17191c;white-space:nowrap;letter-spacing:0px;transform-origin:0 0;transform:scaleX(1.0000);will-change:transform;-webkit-text-stroke:0.2px #17191c;">30</div>
<div style="position:absolute;left:864.50px;top:721px;line-height:24px;height:24px;font-size:21.5px;font-weight:400;color:#17191c;white-space:nowrap;letter-spacing:0px;transform-origin:0 0;transform:scaleX(1.0000);will-change:transform;-webkit-text-stroke:0.2px #17191c;">0</div>
<div style="position:absolute;left:957.30px;top:721px;line-height:24px;height:24px;font-size:21.5px;font-weight:400;color:#17191c;white-space:nowrap;letter-spacing:0px;transform-origin:0 0;transform:scaleX(1.0000);will-change:transform;-webkit-text-stroke:0.2px #17191c;">13.26</div>
<div style="position:absolute;left:1060.49px;top:721px;line-height:24px;height:24px;font-size:21.5px;font-weight:400;color:#17191c;white-space:nowrap;letter-spacing:0px;transform-origin:0 0;transform:scaleX(1.0000);will-change:transform;-webkit-text-stroke:0.2px #17191c;">DineIn</div>
<div style="position:absolute;left:1172.30px;top:721px;line-height:24px;height:24px;font-size:21.5px;font-weight:400;color:#17191c;white-space:nowrap;letter-spacing:0px;transform-origin:0 0;transform:scaleX(1.0150);will-change:transform;-webkit-text-stroke:0.2px #17191c;">7/13/2024 9:48:10 AM</div>
<div style="position:absolute;left:1447.7px;top:721.9px;width:52.2px;height:26.2px;background:#115c39;border-radius:7px"></div>
<div style="position:absolute;left:1457.21px;top:726px;line-height:17px;height:17px;font-size:16px;font-weight:700;color:#b5bdb8;white-space:nowrap;letter-spacing:0px;transform-origin:0 0;transform:scaleX(0.9858);will-change:transform;">Paid</div>
<div style="position:absolute;left:1552px;top:716.3px;width:55.6px;height:50.7px;background:#115c39;border-radius:8px"></div>
<div style="position:absolute;left:1570.5px;top:739.1px;width:4.6px;height:4.6px;border-radius:50%;background:#adadad"></div>
<div style="position:absolute;left:1577.3px;top:739.1px;width:4.6px;height:4.6px;border-radius:50%;background:#adadad"></div>
<div style="position:absolute;left:1583.9px;top:739.1px;width:4.6px;height:4.6px;border-radius:50%;background:#adadad"></div>
<div style="position:absolute;left:1613px;top:716.3px;width:55.8px;height:50.7px;background:#ad8305;border-radius:8px"></div>
<svg style="position:absolute;left:1620px;top:723.1999999999999px;overflow:visible;" width="40" height="40" viewBox="0 0 40 40"><g fill="none" stroke="#adadad" stroke-width="1.4"><path d="M22 25.2 H13 Q11.1 25.2 11.1 23.3 V12.8 Q11.1 10.9 13 10.9 H27.5 Q29.4 10.9 29.4 12.8 V20"/><path d="M11.1 16.4 H29.4"/></g><g fill="#adadad"><circle cx="13.6" cy="13.7" r=".6"/><circle cx="15.5" cy="13.7" r=".6"/><circle cx="17.4" cy="13.7" r=".6"/></g><circle cx="27" cy="24.3" r="5" fill="#adadad" stroke="#ad8305" stroke-width="1.2"/><path d="M25.6 22.9 L28.4 25.7 M28.4 22.9 L25.6 25.7" stroke="#ad8305" stroke-width="1.1"/></svg>
<div style="position:absolute;left:43.24px;top:794px;line-height:24px;height:24px;font-size:21.5px;font-weight:400;color:#17191c;white-space:nowrap;letter-spacing:0px;transform-origin:0 0;transform:scaleX(0.9300);will-change:transform;-webkit-text-stroke:0.2px #17191c;">ABCDEF</div>
<div style="position:absolute;left:210.29px;top:794px;line-height:24px;height:24px;font-size:21.5px;font-weight:400;color:#17191c;white-space:nowrap;letter-spacing:0px;transform-origin:0 0;transform:scaleX(1.0000);will-change:transform;-webkit-text-stroke:0.2px #17191c;">0001</div>
<div style="position:absolute;left:379.26px;top:794px;line-height:24px;height:24px;font-size:21.5px;font-weight:400;color:#17191c;white-space:nowrap;letter-spacing:0px;transform-origin:0 0;transform:scaleX(0.9100);will-change:transform;-webkit-text-stroke:0.2px #17191c;">S1</div>
<div style="position:absolute;left:502.80px;top:794px;line-height:24px;height:24px;font-size:21.5px;font-weight:400;color:#17191c;white-space:nowrap;letter-spacing:0px;transform-origin:0 0;transform:scaleX(1.0200);will-change:transform;-webkit-text-stroke:0.2px #17191c;">Visitor</div>
<div style="position:absolute;left:650.45px;top:794px;line-height:24px;height:24px;font-size:21.5px;font-weight:400;color:#17191c;white-space:nowrap;letter-spacing:0px;transform-origin:0 0;transform:scaleX(1.0000);will-change:transform;-webkit-text-stroke:0.2px #17191c;">0</div>
<div style="position:absolute;left:750.05px;top:794px;line-height:24px;height:24px;font-size:21.5px;font-weight:400;color:#17191c;white-space:nowrap;letter-spacing:0px;transform-origin:0 0;transform:scaleX(1.0000);will-change:transform;-webkit-text-stroke:0.2px #17191c;">0</div>
<div style="position:absolute;left:864.50px;top:794px;line-height:24px;height:24px;font-size:21.5px;font-weight:400;color:#17191c;white-space:nowrap;letter-spacing:0px;transform-origin:0 0;transform:scaleX(1.0000);will-change:transform;-webkit-text-stroke:0.2px #17191c;">0</div>
<div style="position:absolute;left:978.55px;top:794px;line-height:24px;height:24px;font-size:21.5px;font-weight:400;color:#17191c;white-space:nowrap;letter-spacing:0px;transform-origin:0 0;transform:scaleX(1.0000);will-change:transform;-webkit-text-stroke:0.2px #17191c;">0</div>
<div style="position:absolute;left:1060.49px;top:794px;line-height:24px;height:24px;font-size:21.5px;font-weight:400;color:#17191c;white-space:nowrap;letter-spacing:0px;transform-origin:0 0;transform:scaleX(1.0000);will-change:transform;-webkit-text-stroke:0.2px #17191c;">DineIn</div>
<div style="position:absolute;left:1172.30px;top:794px;line-height:24px;height:24px;font-size:21.5px;font-weight:400;color:#17191c;white-space:nowrap;letter-spacing:0px;transform-origin:0 0;transform:scaleX(1.0150);will-change:transform;-webkit-text-stroke:0.2px #17191c;">7/13/2024 9:40:10 AM</div>
<div style="position:absolute;left:1447.7px;top:794.6999999999999px;width:52.2px;height:26.2px;background:#115c39;border-radius:7px"></div>
<div style="position:absolute;left:1457.21px;top:798px;line-height:17px;height:17px;font-size:16px;font-weight:700;color:#b5bdb8;white-space:nowrap;letter-spacing:0px;transform-origin:0 0;transform:scaleX(0.9858);will-change:transform;">Paid</div>
<div style="position:absolute;left:1552px;top:789.0999999999999px;width:55.6px;height:50.7px;background:#115c39;border-radius:8px"></div>
<div style="position:absolute;left:1570.5px;top:811.9px;width:4.6px;height:4.6px;border-radius:50%;background:#adadad"></div>
<div style="position:absolute;left:1577.3px;top:811.9px;width:4.6px;height:4.6px;border-radius:50%;background:#adadad"></div>
<div style="position:absolute;left:1583.9px;top:811.9px;width:4.6px;height:4.6px;border-radius:50%;background:#adadad"></div>
<div style="position:absolute;left:1613px;top:789.0999999999999px;width:55.8px;height:50.7px;background:#ad8305;border-radius:8px"></div>
<svg style="position:absolute;left:1620px;top:795.9999999999999px;overflow:visible;" width="40" height="40" viewBox="0 0 40 40"><g fill="none" stroke="#adadad" stroke-width="1.4"><path d="M22 25.2 H13 Q11.1 25.2 11.1 23.3 V12.8 Q11.1 10.9 13 10.9 H27.5 Q29.4 10.9 29.4 12.8 V20"/><path d="M11.1 16.4 H29.4"/></g><g fill="#adadad"><circle cx="13.6" cy="13.7" r=".6"/><circle cx="15.5" cy="13.7" r=".6"/><circle cx="17.4" cy="13.7" r=".6"/></g><circle cx="27" cy="24.3" r="5" fill="#adadad" stroke="#ad8305" stroke-width="1.2"/><path d="M25.6 22.9 L28.4 25.7 M28.4 22.9 L25.6 25.7" stroke="#ad8305" stroke-width="1.1"/></svg>
<div style="position:absolute;left:15px;top:783.4px;width:1681px;height:71.6px;background:#a2a7ab"></div>
<div style="position:absolute;left:31.78px;top:810px;line-height:22px;height:22px;font-size:20px;font-weight:400;color:#5a5e62;white-space:nowrap;letter-spacing:0px;transform-origin:0 0;transform:scaleX(0.9388);will-change:transform;">#Page size</div>
<div style="position:absolute;left:150.24px;top:810px;line-height:22px;height:22px;font-size:20px;font-weight:400;color:#2a2c2e;white-space:nowrap;letter-spacing:0px;transform-origin:0 0;transform:scaleX(0.9750);will-change:transform;">10</div>
<div style="position:absolute;left:137.4px;top:836.8px;width:47.3px;height:2px;background:#5e6266"></div>
<div style="position:absolute;left:224.53px;top:810px;line-height:22px;height:22px;font-size:20px;font-weight:400;color:#5a5e62;white-space:nowrap;letter-spacing:0px;transform-origin:0 0;transform:scaleX(0.9859);will-change:transform;">Total rows: 26</div>
<div style="position:absolute;left:1253.51px;top:810px;line-height:22px;height:22px;font-size:20px;font-weight:400;color:#5a5e62;white-space:nowrap;letter-spacing:0px;transform-origin:0 0;transform:scaleX(0.9851);will-change:transform;">Current page: 1 /3</div>
<div style="position:absolute;left:1442.2px;top:791px;width:58.6px;height:58.4px;background:#8a8a8a;border-radius:9px"></div>
<div style="position:absolute;left:1461.00px;top:810px;line-height:20px;height:20px;font-size:18px;font-weight:400;color:#1c1c1c;white-space:nowrap;letter-spacing:0px;transform-origin:0 0;transform:scaleX(1.0000);will-change:transform;">&lt;&lt;</div>
<div style="position:absolute;left:1505.3px;top:791px;width:58.6px;height:58.4px;background:#8a8a8a;border-radius:9px"></div>
<div style="position:absolute;left:1529.35px;top:810px;line-height:20px;height:20px;font-size:18px;font-weight:400;color:#1c1c1c;white-space:nowrap;letter-spacing:0px;transform-origin:0 0;transform:scaleX(1.0000);will-change:transform;">&lt;</div>
<div style="position:absolute;left:1568.2px;top:791px;width:58.6px;height:58.4px;background:#2b62a2;border-radius:9px"></div>
<div style="position:absolute;left:1592.25px;top:810px;line-height:20px;height:20px;font-size:18px;font-weight:400;color:#adadad;white-space:nowrap;letter-spacing:0px;transform-origin:0 0;transform:scaleX(1.0000);will-change:transform;">&gt;</div>
<div style="position:absolute;left:1631px;top:791px;width:58.6px;height:58.4px;background:#2b62a2;border-radius:9px"></div>
<div style="position:absolute;left:1649.80px;top:810px;line-height:20px;height:20px;font-size:18px;font-weight:400;color:#adadad;white-space:nowrap;letter-spacing:0px;transform-origin:0 0;transform:scaleX(1.0000);will-change:transform;">&gt;&gt;</div>
<div style="position:absolute;left:407px;top:338px;width:897px;height:198px;background:#fff;border-radius:0;box-shadow:0 11px 15px -7px rgba(0,0,0,.13),0 24px 38px 3px rgba(0,0,0,.09),0 9px 46px 8px rgba(0,0,0,.09)"></div>
<div style="position:absolute;left:438.93px;top:367px;line-height:22px;height:22px;font-size:20px;font-weight:400;color:#212121;white-space:nowrap;letter-spacing:0px;transform-origin:0 0;transform:scaleX(1.0746);will-change:transform;">Confirm?</div>
<div style="position:absolute;left:440.00px;top:406px;line-height:21px;height:21px;font-size:19px;font-weight:400;color:#737373;white-space:nowrap;letter-spacing:1.0px;transform-origin:0 0;transform:scaleX(0.8918);will-change:transform;">Are you sure?</div>
<div style="position:absolute;left:1140.89px;top:493px;line-height:19px;height:19px;font-size:17px;font-weight:400;color:#111;white-space:nowrap;letter-spacing:1.5px;transform-origin:0 0;transform:scaleX(1.1692);will-change:transform;-webkit-text-stroke:0.45px #111;">No</div>
<div style="position:absolute;left:1234.11px;top:493px;line-height:19px;height:19px;font-size:17px;font-weight:400;color:#111;white-space:nowrap;letter-spacing:1.5px;transform-origin:0 0;transform:scaleX(1.0528);will-change:transform;-webkit-text-stroke:0.45px #111;">Yes</div>
<div style="position:absolute;left:1225px;top:482px;width:65px;height:45px;border:3px solid #ff0000;border-radius:2px;box-sizing:border-box"></div>
</body></html>
